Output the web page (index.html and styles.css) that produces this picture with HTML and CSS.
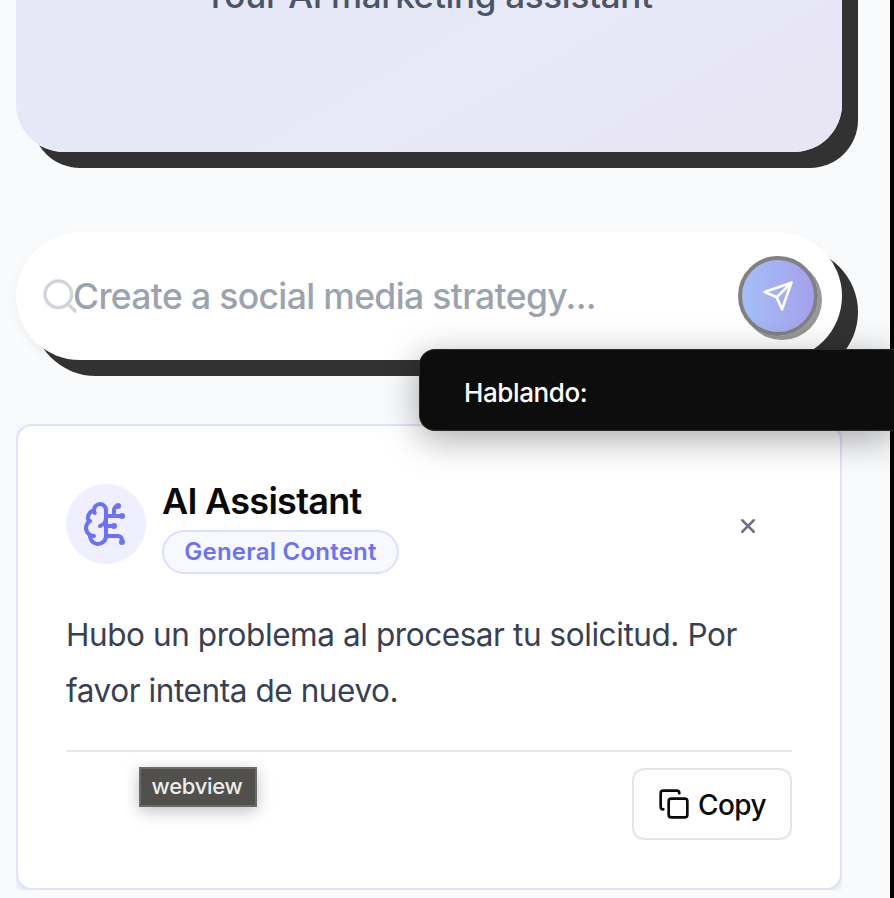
FILE: index.html
```
<!DOCTYPE html>
<html lang="en">
<head>
<meta charset="utf-8">
<title>AI marketing assistant</title>
<link rel="stylesheet" href="styles.css">
</head>
<body>
<div class="app">
  <section class="hero"><p class="tagline"><span>Your AI marketing assistant</span></p></section>
  <div class="prompt">
    <svg class="search-icon" viewBox="0 0 24 24"><circle cx="11" cy="11" r="8"/><path d="m21 21-4.3-4.3"/></svg>
    <span class="placeholder">Create a social media strategy...</span>
    <div class="send"><svg viewBox="0 0 24 24"><path d="m22 2-7 20-4-9-9-4Z"/><path d="M22 2 11 13"/></svg></div>
  </div>
  <div class="card-clip">
    <article class="card">
      <header class="card-head">
        <div class="avatar">
          <svg viewBox="0 0 24 24"><path d="M12 5a3 3 0 1 0-5.997.125 4 4 0 0 0-2.526 5.77 4 4 0 0 0 .556 6.588A4 4 0 1 0 12 18Z"/><path d="M9 13a4.5 4.5 0 0 0 3-4"/><path d="M6.003 5.125A3 3 0 0 0 6.401 6.5"/><path d="M3.477 10.896a4 4 0 0 1 .585-.396"/><path d="M6 18a4 4 0 0 1-1.967-.516"/><path d="M12 13h4"/><path d="M12 18h6a2 2 0 0 1 2 2v1"/><path d="M12 8h8"/><path d="M16 8V5a2 2 0 0 1 2-2"/><circle cx="16" cy="13" r=".5"/><circle cx="18" cy="3" r=".5"/><circle cx="20" cy="21" r=".5"/><circle cx="20" cy="8" r=".5"/></svg>
        </div>
        <div class="who">
          <h2><span>AI Assistant</span></h2>
          <div class="tag"><span>General Content</span></div>
        </div>
        <svg class="close" viewBox="0 0 16 16"><path d="M3.4 3.4l9.2 9.2M12.6 3.4l-9.2 9.2"/></svg>
      </header>
      <p class="message"><span>Hubo un problema al procesar tu solicitud. Por</span><br><span>favor intenta de nuevo.</span></p>
      <footer class="card-foot">
        <div class="copy">
          <svg viewBox="0 0 24 24"><rect width="14" height="14" x="8" y="8" rx="2"/><path d="M4 16c-1.1 0-2-.9-2-2V4c0-1.1.9-2 2-2h10c1.1 0 2 .9 2 2"/></svg>
          <span>Copy</span>
        </div>
      </footer>
    </article>
  </div>
</div>
<div class="speech"><span>Hablando:</span></div>
<div class="tooltip"><span>webview</span></div>
</body>
</html>
```
FILE: styles.css
```
* { box-sizing: border-box; }
html { background: #000; }
body { margin: 0; width: 894px; height: 898px; overflow: hidden; position: relative; background: #000; font-family: Inter, "Liberation Sans", sans-serif; }
p, h2 { margin: 0; }
span { white-space: nowrap; }
svg { display: block; fill: none; stroke: currentColor; stroke-width: 2; stroke-linecap: round; stroke-linejoin: round; flex: none; }
.app { width: 890px; height: 898px; padding: 0 48px 0 16px; background: #f9fafc; display: flow-root; overflow: hidden; }
.hero { height: 200px; margin-top: -48px; padding-top: 19px; border-radius: 0 0 48px 48px; background: linear-gradient(150deg, #e6e8f8 0%, #e7e8f8 60%, #e8e6f6 80%, #e8e5f5 100%); box-shadow: 16px 16px 0 #323232; text-align: center; }
.tagline { margin-right: 2px; line-height: 48px; font-size: 35px; font-weight: 500; letter-spacing: -.3px; color: #4b5563; }
.prompt { margin-top: 80px; height: 128px; border-radius: 64px; background: #fff; box-shadow: 16px 16px 0 #323232, 0 4px 12px rgba(0,0,0,.05); display: flex; align-items: center; padding: 0 24px; }
.search-icon { width: 40px; height: 40px; color: #d1d5db; }
.placeholder { margin-left: -7px; font-size: 35.5px; font-weight: 450; letter-spacing: -.65px; color: #9ca3af; }
.send { margin-left: auto; width: 80px; height: 80px; border: 4px solid #818181; border-radius: 50%; background: linear-gradient(90deg, #a4bff6, #a5a0ec); box-shadow: 4px 4px 0 #989898; display: flex; align-items: center; justify-content: center; color: #fff; }
.send svg { width: 32px; height: 32px; }
.card-clip { margin-top: 64px; height: 466px; overflow: hidden; }
.card { height: 466px; border: 2px solid #e0e0ff; border-radius: 16px; background: #fff; padding: 58px 48px 0; box-shadow: 0 4px 12px rgba(0,0,0,.1); }
.card-head { height: 90px; display: flex; align-items: flex-start; }
.avatar { width: 80px; height: 80px; border-radius: 50%; background: #f0efff; color: #6c72f8; display: flex; align-items: center; justify-content: center; }
.avatar svg { width: 48px; height: 48px; }
.who { margin-left: 16px; }
h2 { font-size: 36px; line-height: 35px; height: 46px; font-weight: 570; letter-spacing: -.72px; color: #0a0a0a; }
.tag { width: 237px; height: 44px; border: 2px solid #dedeff; border-radius: 22px; background: #f8f8ff; color: #6c72f8; display: flex; align-items: center; justify-content: center; font-size: 24px; font-weight: 570; letter-spacing: .22px; padding-bottom: 1px; }
.close { width: 20px; height: 20px; margin: 32px 34px 0 auto; color: #6b7280; }
.message { margin-top: 33px; height: 143px; font-size: 31.5px; line-height: 56px; letter-spacing: -.42px; color: #374151; }
.card-foot { border-top: 2px solid #e5e7eb; padding-top: 16px; display: flex; justify-content: flex-end; }
.copy { width: 160px; height: 72px; border: 2px solid #e5e5e5; border-radius: 12px; display: flex; align-items: center; justify-content: center; gap: 8px; font-size: 28px; font-weight: 500; letter-spacing: -.6px; color: #0a0a0a; }
.copy svg { width: 32px; height: 32px; }
.copy span { margin-top: 1px; }
.speech { position: absolute; left: 419px; top: 349px; width: 475px; height: 82px; padding: 4px 0 0 44px; border-radius: 16px 0 0 16px; border: 1px solid #2a2a2a; border-right: 0; background: #0d0d0d; color: #fff; font-size: 26px; font-weight: 450; letter-spacing: -.4px; display: flex; align-items: center; box-shadow: 0 8px 36px rgba(0,0,0,.35); }
.tooltip { position: absolute; left: 139px; top: 767px; width: 118px; height: 40px; border: 2px solid #6b6a67; background: #51504c; color: #ececec; font-size: 22px; font-weight: 450; letter-spacing: -.3px; padding: 0 2px 3px 0; display: flex; align-items: center; justify-content: center; box-shadow: 0 4px 16px rgba(0,0,0,.25); }
```
